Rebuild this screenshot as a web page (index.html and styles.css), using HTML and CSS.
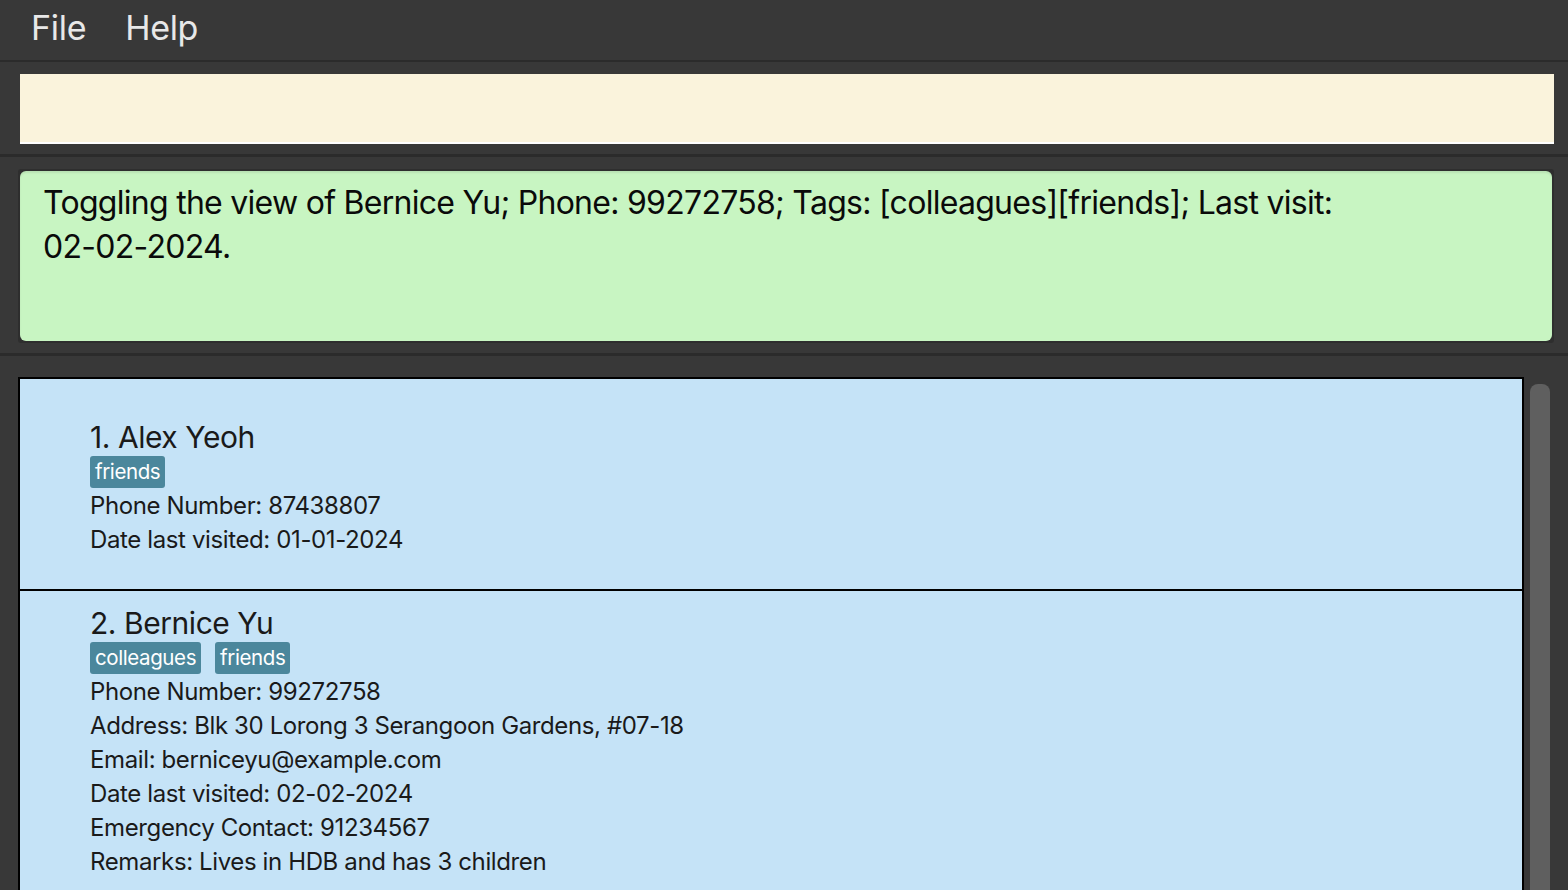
FILE: index.html
```html
<!DOCTYPE html>
<html>
<head>
<meta charset="utf-8">
<link rel="stylesheet" href="styles.css">
</head>
<body>
<div class="app">
  <div class="menubar">
    <span class="menu-item">File</span>
    <span class="menu-item">Help</span>
  </div>
  <div class="pane command-pane">
    <div class="command-box"></div>
  </div>
  <div class="pane result-pane">
    <div class="result-frame">
      <div class="result-box">Toggling the view of Bernice Yu; Phone: 99272758; Tags: [colleagues][friends]; Last visit: 02-02-2024.</div>
    </div>
  </div>
  <div class="pane list-pane">
    <div class="list">
      <div class="card card-short">
        <div class="name">1. Alex Yeoh</div>
        <div class="tags"><span class="tag">friends</span></div>
        <div class="line">Phone Number: 87438807</div>
        <div class="line">Date last visited: 01-01-2024</div>
      </div>
      <div class="card">
        <div class="name">2. Bernice Yu</div>
        <div class="tags"><span class="tag">colleagues</span><span class="tag">friends</span></div>
        <div class="line">Phone Number: 99272758</div>
        <div class="line">Address: Blk 30 Lorong 3 Serangoon Gardens, #07-18</div>
        <div class="line">Email: berniceyu@example.com</div>
        <div class="line">Date last visited: 02-02-2024</div>
        <div class="line">Emergency Contact: 91234567</div>
        <div class="line">Remarks: Lives in HDB and has 3 children</div>
      </div>
    </div>
    <div class="scroll-track"><div class="scroll-thumb"></div></div>
  </div>
</div>
</body>
</html>
```
FILE: styles.css
```css
html, body {
  margin: 0;
  padding: 0;
  height: 100%;
  overflow: hidden;
  background: #383838;
  font-family: Inter, "Noto Sans", sans-serif;
}
.app {
  display: flex;
  flex-direction: column;
  height: 890px;
}
.menubar {
  display: flex;
  align-items: center;
  gap: 39px;
  padding-left: 31px;
  border-bottom: 2px solid #2b2b2b;
  box-sizing: border-box;
  height: 62px;
}
.menu-item {
  color: #e8e8e8;
  font-size: 34px;
  letter-spacing: -0.3px;
  line-height: 56px;
  padding-bottom: 4px;
}
.pane {
  background: #383838;
}
.command-pane {
  padding: 12px 14px 10px 20px;
  border-bottom: 3px solid #2b2b2b;
}
.command-box {
  height: 68px;
  background: #faf3dc;
  border-bottom: 2px solid #ffffff;
}
.result-pane {
  padding: 12px 14px 10px 18px;
  border-bottom: 3px solid #2b2b2b;
}
.result-frame {
  background: #2e2e2e;
  padding: 2px;
  border-radius: 3px;
}
.result-box {
  height: 170px;
  box-sizing: border-box;
  background: #c8f5c2;
  border-radius: 6px;
  box-shadow: inset 0 2px 2px rgba(0,0,0,0.08);
  padding: 10px 180px 0 23px;
  font-size: 32px;
  line-height: 44px;
  letter-spacing: -0.72px;
  color: #0a0a0a;
}
.list-pane {
  flex: 1;
  display: flex;
  padding: 21px 0 0 18px;
  gap: 6px;
  min-height: 0;
}
.list {
  width: 1506px;
  box-sizing: border-box;
  border: 2px solid #000;
  border-bottom: none;
  background: #c5e3f7;
  overflow: hidden;
}
.card {
  padding: 14px 0 0 70px;
  border-top: 2px solid #000;
  color: #1a1a1a;
  height: 298px;
  box-sizing: border-box;
}
.card:first-child {
  border-top: none;
}
.card-short {
  height: 210px;
  padding-top: 40px;
}
.name {
  font-size: 30px;
  line-height: 36px;
  letter-spacing: -0.45px;
  color: #1a1a1a;
}
.tags {
  display: flex;
  gap: 14px;
  height: 34px;
  align-items: center;
}
.tag {
  background: #4b879c;
  color: #fff;
  font-size: 20.5px;
  line-height: 32px;
  height: 32px;
  padding: 0 5px;
  border-radius: 3px;
  letter-spacing: -0.4px;
}
.line {
  font-size: 24px;
  line-height: 34px;
  letter-spacing: -0.38px;
  color: #1a1a1a;
}
.scroll-track {
  width: 20px;
  padding-top: 7px;
}
.scroll-thumb {
  width: 20px;
  height: 100%;
  background: #5f5f5f;
  border-radius: 8px 8px 0 0;
}
```
